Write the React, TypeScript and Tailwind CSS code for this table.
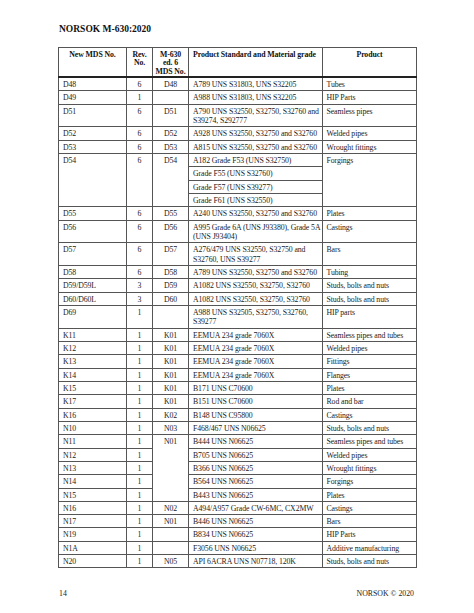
import React from "react"

type Row = {
  mds: string
  rev: string
  old?: string
  std: string[]
  product: string
  oldSpan?: number
  skipOld?: boolean
}

const rows: Row[] = [
  { mds: "D48", rev: "6", old: "D48", std: ["A789 UNS S31803, UNS S32205"], product: "Tubes" },
  { mds: "D49", rev: "1", old: "", std: ["A988 UNS S31803, UNS S32205"], product: "HIP Parts" },
  { mds: "D51", rev: "6", old: "D51", std: ["A790 UNS S32550, S32750, S32760 and", "S39274, S292777"], product: "Seamless pipes" },
  { mds: "D52", rev: "6", old: "D52", std: ["A928 UNS S32550, S32750 and S32760"], product: "Welded pipes" },
  { mds: "D53", rev: "6", old: "D53", std: ["A815 UNS S32550, S32750 and S32760"], product: "Wrought fittings" },
]

const rowsAfter: Row[] = [
  { mds: "D55", rev: "6", old: "D55", std: ["A240 UNS S32550, S32750 and S32760"], product: "Plates" },
  { mds: "D56", rev: "6", old: "D56", std: ["A995 Grade 6A (UNS J93380), Grade 5A", "(UNS J93404)"], product: "Castings" },
  { mds: "D57", rev: "6", old: "D57", std: ["A276/479 UNS S32550, S32750 and", "S32760, UNS S39277"], product: "Bars" },
  { mds: "D58", rev: "6", old: "D58", std: ["A789 UNS S32550, S32750 and S32760"], product: "Tubing" },
  { mds: "D59/D59L", rev: "3", old: "D59", std: ["A1082 UNS S32550, S32750, S32760"], product: "Studs, bolts and nuts" },
  { mds: "D60/D60L", rev: "3", old: "D60", std: ["A1082 UNS S32550, S32750, S32760"], product: "Studs, bolts and nuts" },
  { mds: "D69", rev: "1", old: "", std: ["A988 UNS S32505, S32750, S32760,", "S39277"], product: "HIP parts" },
  { mds: "K11", rev: "1", old: "K01", std: ["EEMUA 234 grade 7060X"], product: "Seamless pipes and tubes" },
  { mds: "K12", rev: "1", old: "K01", std: ["EEMUA 234 grade 7060X"], product: "Welded pipes" },
  { mds: "K13", rev: "1", old: "K01", std: ["EEMUA 234 grade 7060X"], product: "Fittings" },
  { mds: "K14", rev: "1", old: "K01", std: ["EEMUA 234 grade 7060X"], product: "Flanges" },
  { mds: "K15", rev: "1", old: "K01", std: ["B171 UNS C70600"], product: "Plates" },
  { mds: "K17", rev: "1", old: "K01", std: ["B151 UNS C70600"], product: "Rod and bar" },
  { mds: "K16", rev: "1", old: "K02", std: ["B148 UNS C95800"], product: "Castings" },
  { mds: "N10", rev: "1", old: "N03", std: ["F468/467 UNS N06625"], product: "Studs, bolts and nuts" },
  { mds: "N11", rev: "1", old: "N01", oldSpan: 5, std: ["B444 UNS N06625"], product: "Seamless pipes and tubes" },
  { mds: "N12", rev: "1", skipOld: true, std: ["B705 UNS N06625"], product: "Welded pipes" },
  { mds: "N13", rev: "1", skipOld: true, std: ["B366 UNS N06625"], product: "Wrought fittings" },
  { mds: "N14", rev: "1", skipOld: true, std: ["B564 UNS N06625"], product: "Forgings" },
  { mds: "N15", rev: "1", skipOld: true, std: ["B443 UNS N06625"], product: "Plates" },
  { mds: "N16", rev: "1", old: "N02", std: ["A494/A957 Grade CW-6MC, CX2MW"], product: "Castings" },
  { mds: "N17", rev: "1", old: "N01", std: ["B446 UNS N06625"], product: "Bars" },
  { mds: "N19", rev: "1", old: "", std: ["B834 UNS N06625"], product: "HIP Parts" },
  { mds: "N1A", rev: "1", old: "", std: ["F3056 UNS N06625"], product: "Additive manufacturing" },
  { mds: "N20", rev: "1", old: "N05", std: ["API 6ACRA UNS N07718, 120K"], product: "Studs, bolts and nuts" },
]

// body cell: ~13.3px single row, 9.33px line
const cell = "border border-[#555] align-top pt-[2px] pb-[1px] h-[13.3px] leading-[9.33px] whitespace-nowrap overflow-hidden"
const head = "border border-[#555] align-top pt-[2.5px] leading-[8.5px]"

function BodyRow({ r }: { r: Row }) {
  return (
    <tr>
      <td className={`${cell} pl-[4px]`}>{r.mds}</td>
      <td className={`${cell} text-center`}>{r.rev}</td>
      {!r.skipOld && (
        <td className={`${cell} text-center`} rowSpan={r.oldSpan ?? 1}>
          {r.old}
        </td>
      )}
      <td className={`${cell} pl-[4px]`}>
        {r.std.map((s, i) => (
          <div key={i}>{s}</div>
        ))}
      </td>
      <td className={`${cell} pl-[3.5px]`}>{r.product}</td>
    </tr>
  )
}

export default function App() {
  return (
    <div
      className="w-[474px] h-[613px] bg-white text-[#222] pt-[24px]"
      style={{ fontFamily: '"Liberation Serif", "Times New Roman", serif' }}
    >
      <div className="pl-[59px] font-bold text-[9.5px] leading-[10px] text-[#111]">NORSOK M-630:2020</div>

      <table className="ml-[58px] mt-[13px] w-[358px] table-fixed border-collapse border-[1.5px] border-[#1a1a1a] text-[7.8px] tracking-[-0.1px]">
        <colgroup>
          <col className="w-[68px]" />
          <col className="w-[26px]" />
          <col className="w-[36px]" />
          <col className="w-[134px]" />
          <col className="w-[94px]" />
        </colgroup>
        <thead>
          <tr className="border-b-[2px] border-[#222] font-bold text-[#111]">
            <td className={`${head} text-center pb-[2px] h-[29px]`}>New MDS No.</td>
            <td className={`${head} text-center`}>
              Rev.
              <br />
              No.
            </td>
            <td className={`${head} text-center`}>
              M-630
              <br />
              ed. 6
              <br />
              MDS No.
            </td>
            <td className={`${head} pl-[4px] whitespace-nowrap`}>Product Standard and Material grade</td>
            <td className={`${head} text-center`}>Product</td>
          </tr>
        </thead>
        <tbody>
          {rows.map((r) => (
            <BodyRow key={r.mds} r={r} />
          ))}
          <tr>
            <td className={`${cell} pl-[4px]`} rowSpan={4}>D54</td>
            <td className={`${cell} text-center`} rowSpan={4}>6</td>
            <td className={`${cell} text-center`} rowSpan={4}>D54</td>
            <td className={`${cell} pl-[4px]`}>A182 Grade F53 (UNS S32750)</td>
            <td className={`${cell} pl-[3.5px]`} rowSpan={4}>Forgings</td>
          </tr>
          <tr>
            <td className={`${cell} pl-[4px]`}>Grade F55 (UNS S32760)</td>
          </tr>
          <tr>
            <td className={`${cell} pl-[4px]`}>Grade F57 (UNS S39277)</td>
          </tr>
          <tr>
            <td className={`${cell} pl-[4px]`}>Grade F61 (UNS S32550)</td>
          </tr>
          {rowsAfter.map((r) => (
            <BodyRow key={r.mds} r={r} />
          ))}
        </tbody>
      </table>

      <div className="ml-[59px] mr-[60px] mt-[21px] flex justify-between text-[7.8px] leading-[9px]">
        <span>14</span>
        <span>NORSOK © 2020</span>
      </div>
    </div>
  )
}
